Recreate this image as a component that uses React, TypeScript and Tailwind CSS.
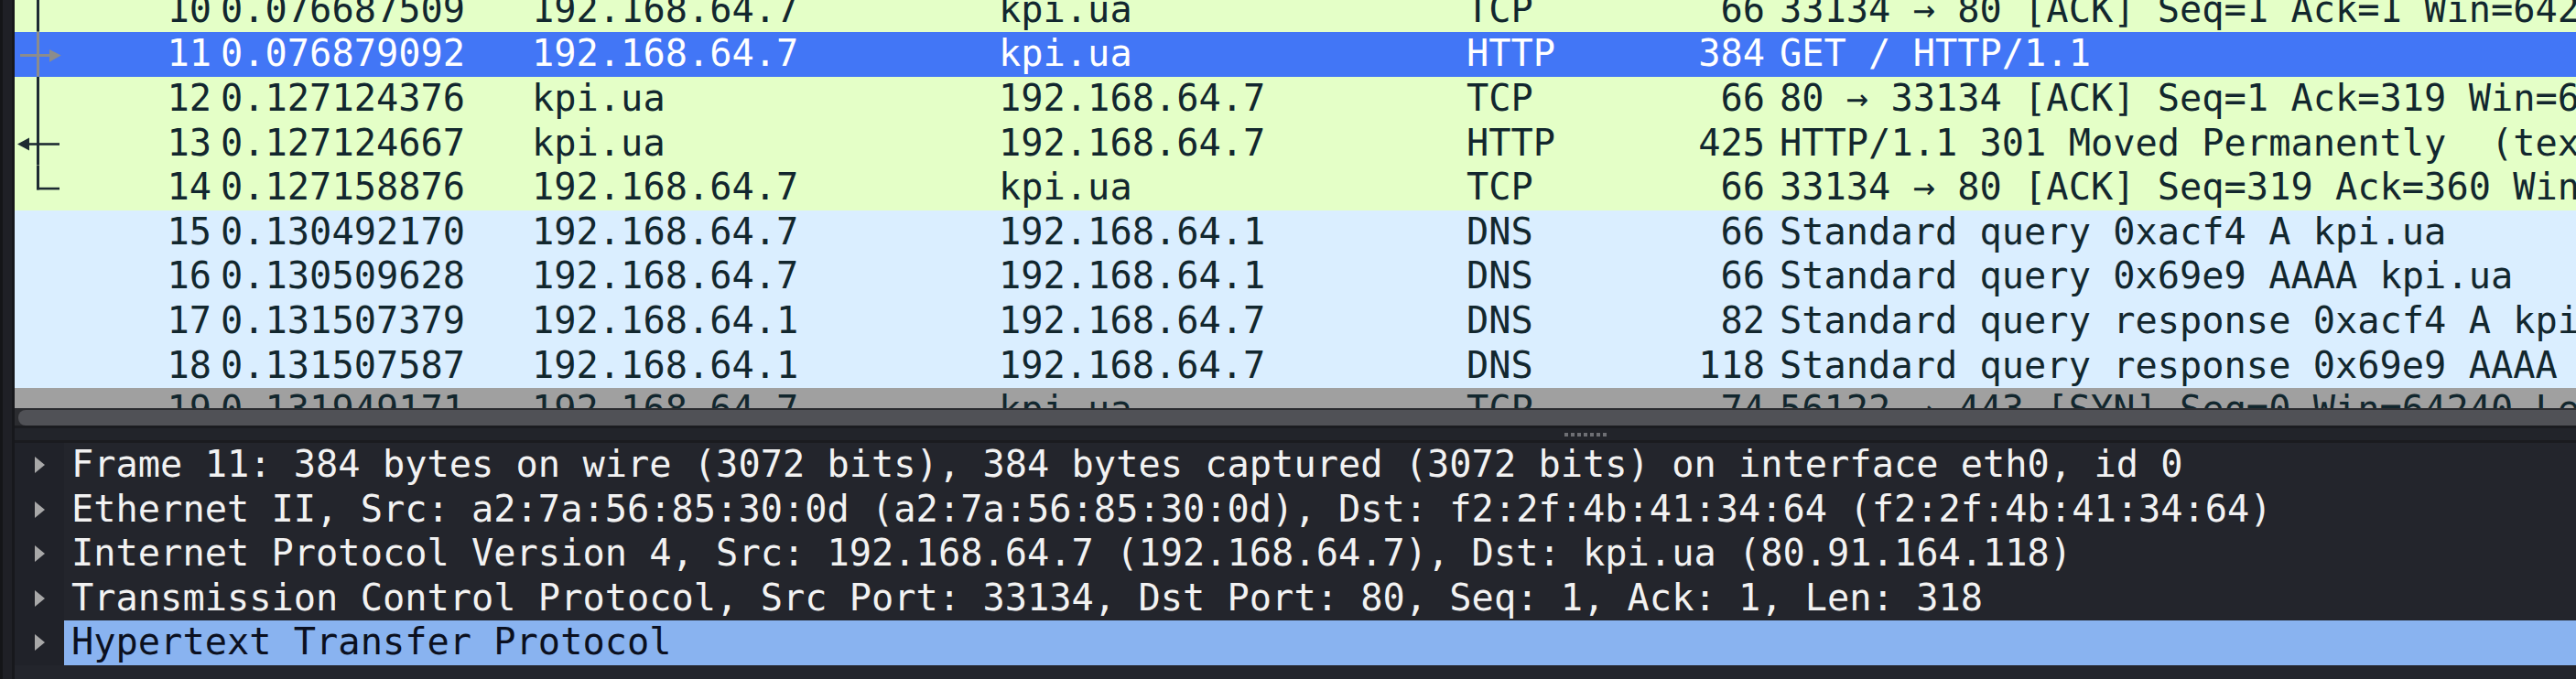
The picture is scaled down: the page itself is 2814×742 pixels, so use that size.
import React from "react";

type Kind = "green" | "blue" | "gray" | "sel";
type Rel = "line" | "out" | "in" | "end" | "none";

interface Row {
  no: number;
  time: string;
  src: string;
  dst: string;
  proto: string;
  len: number;
  info: string;
  kind: Kind;
  rel: Rel;
}

const rows: Row[] = [
  { no: 10, time: "0.076687509", src: "192.168.64.7", dst: "kpi.ua", proto: "TCP", len: 66, info: "33134 → 80 [ACK] Seq=1 Ack=1 Win=64256 Len=0", kind: "green", rel: "line" },
  { no: 11, time: "0.076879092", src: "192.168.64.7", dst: "kpi.ua", proto: "HTTP", len: 384, info: "GET / HTTP/1.1", kind: "sel", rel: "out" },
  { no: 12, time: "0.127124376", src: "kpi.ua", dst: "192.168.64.7", proto: "TCP", len: 66, info: "80 → 33134 [ACK] Seq=1 Ack=319 Win=64128 Len=0", kind: "green", rel: "line" },
  { no: 13, time: "0.127124667", src: "kpi.ua", dst: "192.168.64.7", proto: "HTTP", len: 425, info: "HTTP/1.1 301 Moved Permanently  (text/html)", kind: "green", rel: "in" },
  { no: 14, time: "0.127158876", src: "192.168.64.7", dst: "kpi.ua", proto: "TCP", len: 66, info: "33134 → 80 [ACK] Seq=319 Ack=360 Win=63898 Len=0", kind: "green", rel: "end" },
  { no: 15, time: "0.130492170", src: "192.168.64.7", dst: "192.168.64.1", proto: "DNS", len: 66, info: "Standard query 0xacf4 A kpi.ua", kind: "blue", rel: "none" },
  { no: 16, time: "0.130509628", src: "192.168.64.7", dst: "192.168.64.1", proto: "DNS", len: 66, info: "Standard query 0x69e9 AAAA kpi.ua", kind: "blue", rel: "none" },
  { no: 17, time: "0.131507379", src: "192.168.64.1", dst: "192.168.64.7", proto: "DNS", len: 82, info: "Standard query response 0xacf4 A kpi.ua A 80.91.164.118", kind: "blue", rel: "none" },
  { no: 18, time: "0.131507587", src: "192.168.64.1", dst: "192.168.64.7", proto: "DNS", len: 118, info: "Standard query response 0x69e9 AAAA kpi.ua SOA ns.kpi.ua", kind: "blue", rel: "none" },
  { no: 19, time: "0.131949171", src: "192.168.64.7", dst: "kpi.ua", proto: "TCP", len: 74, info: "56122 → 443 [SYN] Seq=0 Win=64240 Len=0 MSS=1460", kind: "gray", rel: "none" },
];

const details = [
  "Frame 11: 384 bytes on wire (3072 bits), 384 bytes captured (3072 bits) on interface eth0, id 0",
  "Ethernet II, Src: a2:7a:56:85:30:0d (a2:7a:56:85:30:0d), Dst: f2:2f:4b:41:34:64 (f2:2f:4b:41:34:64)",
  "Internet Protocol Version 4, Src: 192.168.64.7 (192.168.64.7), Dst: kpi.ua (80.91.164.118)",
  "Transmission Control Protocol, Src Port: 33134, Dst Port: 80, Seq: 1, Ack: 1, Len: 318",
  "Hypertext Transfer Protocol",
];

const RH = 48.625;
const DARK = "#1d2b32";
const GRAY = "#8c8c8c";

function RelIndicator({ rel }: { rel: Rel }) {
  if (rel === "none") return null;
  return (
    <svg
      className="absolute left-0 top-0"
      width={60}
      height={RH}
      viewBox={`0 0 60 ${RH}`}
    >
      {rel === "line" && <rect x={24} y={0} width={3} height={RH} fill={DARK} />}
      {rel === "out" && (
        <g fill={GRAY}>
          <rect x={24} y={0} width={3} height={RH} />
          <rect x={6} y={24} width={34} height={3} />
          <polygon points="38,19 38,32.7 50.7,25.5" />
        </g>
      )}
      {rel === "in" && (
        <g fill={DARK}>
          <rect x={24} y={0} width={3} height={RH} />
          <rect x={8} y={24.2} width={41} height={2.6} />
          <polygon points="16,18.4 16,32.4 3,25.4" />
        </g>
      )}
      {rel === "end" && (
        <g fill={DARK}>
          <rect x={24} y={0} width={3} height={26.4} />
          <rect x={24} y={23.8} width={25} height={2.6} />
        </g>
      )}
    </svg>
  );
}

const kindCls: Record<Kind, string> = {
  green: "bg-[#e4ffc7] text-[#12272e]",
  blue: "bg-[#daeeff] text-[#12272e]",
  gray: "bg-[#a0a0a0] text-[#12272e]",
  sel: "bg-[#4276f6] text-white",
};

function PacketRow({ r }: { r: Row }) {
  return (
    <div className={`flex h-[48.625px] shrink-0 items-center whitespace-pre ${kindCls[r.kind]}`}>
      <div className="relative flex h-full w-[215px] shrink-0 items-center justify-end">
        <RelIndicator rel={r.rel} />
        <span>{r.no}</span>
      </div>
      <div className="w-[350px] shrink-0 pl-[10px]">{r.time}</div>
      <div className="w-[510px] shrink-0">{r.src}</div>
      <div className="w-[511px] shrink-0">{r.dst}</div>
      <div className="w-[180px] shrink-0">{r.proto}</div>
      <div className="w-[146px] shrink-0 text-right">{r.len}</div>
      <div className="min-w-0 flex-1 overflow-hidden pl-[16px]">{r.info}</div>
    </div>
  );
}

function Triangle() {
  return (
    <svg width={11} height={18} viewBox="0 0 11 18">
      <polygon points="0,0 0,18 11,9" fill="#a8a8a8" />
    </svg>
  );
}

export default function App() {
  return (
    <div className="flex h-[742px] w-[2814px] overflow-hidden bg-[#1f2026] font-['DejaVu_Sans_Mono',monospace] text-[40.35px] leading-[46px]">
      <div className="w-[3px] shrink-0 bg-[#141518]" />
      <div className="w-[10px] shrink-0 bg-[#1f2026]" />
      <div className="flex min-w-0 flex-1 flex-col border-l-[3px] border-[#17181c]">
        {/* packet list */}
        <div className="h-[446px] shrink-0 overflow-hidden">
          <div className="-mt-[13.625px] flex flex-col">
            {rows.map((r) => (
              <PacketRow key={r.no} r={r} />
            ))}
          </div>
        </div>
        {/* horizontal scrollbar */}
        <div className="flex h-[19px] shrink-0 border-t-2 border-[#2b2c30] bg-[#2b2c30] pl-[4px]">
          <div className="h-full flex-1 rounded-l-[8px] bg-[#505156]" />
        </div>
        <div className="h-[3px] shrink-0 bg-[#1b1c20]" />
        {/* splitter */}
        <div className="flex h-[13px] shrink-0 items-center bg-[#22242a] pl-[1693px]">
          <div className="flex gap-[3px]">
            {[0, 1, 2, 3, 4, 5, 6].map((i) => (
              <div key={i} className="h-[4px] w-[4px] bg-[#6e6f74]" />
            ))}
          </div>
        </div>
        <div className="h-[2.6px] shrink-0 bg-[#1a1b1f]" />
        {/* details */}
        <div className="flex flex-1 flex-col bg-[#23252c]">
          {details.map((d, i) => {
            const sel = i === details.length - 1;
            return (
              <div key={i} className="flex h-[48.625px] shrink-0 items-center whitespace-pre">
                <div className="flex h-full w-[54px] shrink-0 items-center bg-[#202229] pl-[22px]">
                  <Triangle />
                </div>
                <div
                  className={`flex h-full min-w-0 flex-1 items-center overflow-hidden pl-[8px] ${
                    sel ? "bg-[#89b3f0] text-[#0b1020]" : "text-[#f2f2f2]"
                  }`}
                >
                  {d}
                </div>
              </div>
            );
          })}
        </div>
      </div>
    </div>
  );
}
